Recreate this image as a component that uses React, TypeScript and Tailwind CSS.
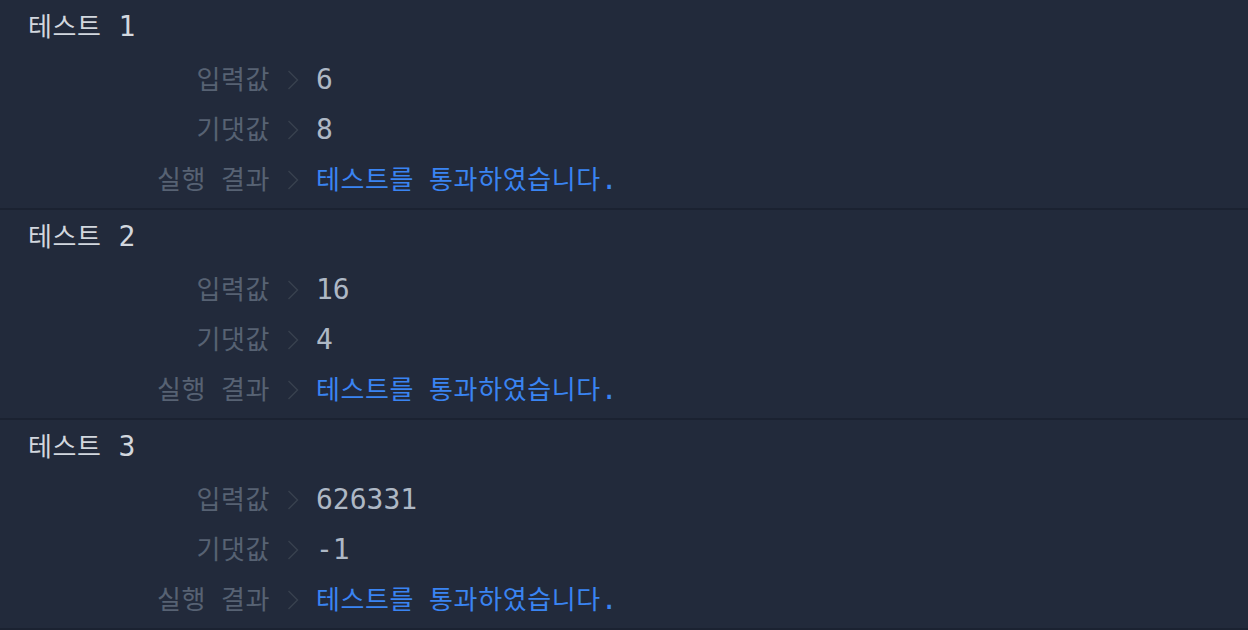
import React from 'react';

interface TestCase {
  input: string;
  expected: string;
}

const cases: TestCase[] = [
  { input: '6', expected: '8' },
  { input: '16', expected: '4' },
  { input: '626331', expected: '-1' },
];

// Hangul is narrower in Noto than in the mac font, so it gets its own size
const Ko: React.FC<{ text: string }> = ({ text }) => (
  <span className="text-[26px] tracking-[0.6px]">
    {text.split(' ').map((w, i) => (
      <React.Fragment key={i}>
        {i > 0 && <span className="inline-block w-[15px]" />}
        {w}
      </React.Fragment>
    ))}
  </span>
);

const Chevron = () => (
  <svg width="12" height="20" viewBox="0 0 12 20" className="shrink-0">
    <polyline points="1.5,1 10.5,10 1.5,19" fill="none" stroke="#38414f" strokeWidth="1.4" />
  </svg>
);

const Row: React.FC<{ label: string; children: React.ReactNode }> = ({ label, children }) => (
  <div className="flex h-[50px] items-center">
    <div className="w-[270px] text-right text-[#576273] whitespace-nowrap">
      <Ko text={label} />
    </div>
    <div className="ml-[17px] mr-[17px] flex items-center">
      <Chevron />
    </div>
    <div className="whitespace-pre">{children}</div>
  </div>
);

export default function App() {
  return (
    <div
      className="min-h-[630px] w-full bg-[#222a3b] text-[28px] leading-none"
      style={{ fontFamily: '"DejaVu Sans Mono", "Noto Sans CJK KR", monospace' }}
    >
      {cases.map((c, i) => (
        <div key={i} className="border-b-2 border-[#1b2231] pt-[2px] pb-[3px]">
          <div className="flex h-[50px] items-center pl-[28px] text-[#d2d7de]">
            <Ko text="테스트" />
            <span>&nbsp;{i + 1}</span>
          </div>
          <div className="mt-[3px]">
            <Row label="입력값">
              <span className="text-[#aeb8c5]">{c.input}</span>
            </Row>
            <Row label="기댓값">
              <span className="text-[#aeb8c5]">{c.expected}</span>
            </Row>
            <Row label="실행 결과">
              <span className="text-[#3a84f2]">
                <Ko text="테스트를 통과하였습니다" />.
              </span>
            </Row>
          </div>
        </div>
      ))}
    </div>
  );
}
